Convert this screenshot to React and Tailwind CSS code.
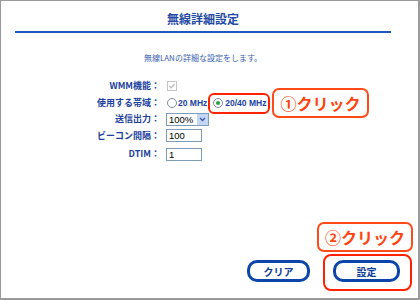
import React from 'react';

const Radio = ({ checked }) => (
  <span className="flex h-[10px] w-[10px] items-center justify-center rounded-full border border-[#7b8a9c] bg-white">
    {checked && <span className="h-[4px] w-[4px] rounded-full bg-[#21a33a]" />}
  </span>
);

const Row = ({ label, h, children }) => (
  <div className={`flex items-center ${h}`}>
    <div className="w-[159px] text-right text-[9px] font-bold leading-[12px] text-[#1b3f9e]">{label}</div>
    <div className="ml-[6px] flex items-center">{children}</div>
  </div>
);

const App = () => {
  return (
    <div className="relative box-border h-[300px] w-[420px] overflow-hidden border-t border-l border-r-2 border-b-2 border-[#9a9a9a] bg-white font-['Noto_Sans_CJK_JP',sans-serif]">
      {/* Header */}
      <div className="ml-[14px] w-[376px]">
        <h1 className="pt-[10px] text-center text-[12px] font-bold leading-[16px] text-[#1f4aa5]">無線詳細設定</h1>
        <div className="mt-[4px] h-[2px] bg-[#1c58c0]" />
        <p className="mt-[18px] text-center text-[8px] leading-[14px] text-[#3a5fb0]">無線LANの詳細な設定をします。</p>
      </div>

      {/* Form */}
      <div className="mt-[13px]">
        <Row label="WMM機能：" h="h-[16px]">
          <span className="ml-px flex h-[10px] w-[10px] items-center justify-center border border-[#c4c4c4] bg-white">
            <svg width="8" height="8" viewBox="0 0 8 8">
              <path d="M1.5 4 L3.2 5.8 L6.5 2" fill="none" stroke="#b8b8b8" strokeWidth="1.2" />
            </svg>
          </span>
        </Row>
        <Row label="使用する帯域：" h="h-[18px]">
          <span className="ml-px"><Radio /></span>
          <span className="ml-px font-['Liberation_Sans',sans-serif] text-[8.5px] font-bold text-[#1a44a0]">20 MHz</span>
          <span className="ml-[6px]"><Radio checked /></span>
          <span className="ml-[2px] font-['Liberation_Sans',sans-serif] text-[8.5px] font-bold text-[#1a44a0]">20/40 MHz</span>
        </Row>
        <Row label="送信出力：" h="h-[14px]">
          <div className="flex h-[13px] w-[43px] border border-[#7f9db9] bg-white">
            <span className="flex-1 pl-[2px] font-['Liberation_Sans',sans-serif] text-[9.5px] leading-[11px] text-black">100%</span>
            <span className="flex w-[11px] items-center justify-center bg-[#c5d5f5]">
              <svg width="7" height="5" viewBox="0 0 7 5">
                <path d="M1 1 L3.5 3.5 L6 1" fill="none" stroke="#3b5fa8" strokeWidth="1.4" />
              </svg>
            </span>
          </div>
        </Row>
        <Row label="ビーコン間隔：" h="h-[19px]">
          <div className="h-[13px] w-[36px] border border-[#7f9db9] bg-white pl-[2px] font-['Liberation_Sans',sans-serif] text-[9.5px] leading-[11px] text-black">100</div>
        </Row>
        <Row label="DTIM：" h="h-[18px]">
          <div className="h-[13px] w-[36px] border border-[#7f9db9] bg-white pl-[2px] font-['Liberation_Sans',sans-serif] text-[9.5px] leading-[11px] text-black">1</div>
        </Row>
      </div>

      {/* Buttons */}
      <div className="mt-[97px] flex justify-end gap-[23px] pr-[18px]">
        <button className="flex h-[22px] w-[63px] items-center justify-center rounded-[10px] border-[3px] border-[#0b45aa] bg-white text-[10px] font-bold text-[#0b3d99]">クリア</button>
        <button className="flex h-[22px] w-[67px] items-center justify-center rounded-[10px] border-[3px] border-[#0b45aa] bg-white text-[10px] font-bold text-[#0b3d99]">設定</button>
      </div>

      {/* Highlights */}
      <div className="absolute left-[207px] top-[92px] h-[21px] w-[62px] rounded-[6px] border-2 border-[#ff2200]" />
      <div className="absolute left-[271px] top-[87px] flex h-[30px] w-[97px] items-center justify-center rounded-[7px] border-2 border-[#ff4a1a] bg-white text-[16px] font-bold leading-none text-[#ff4411]">①クリック</div>
      <div className="absolute left-[316px] top-[221px] flex h-[30px] w-[96px] items-center justify-center rounded-[7px] border-2 border-[#ff4a1a] bg-white text-[16px] font-bold leading-none text-[#ff4411]">②クリック</div>
      <div className="absolute left-[322px] top-[253px] h-[37px] w-[89px] rounded-[8px] border-2 border-[#ff2200]" />
    </div>
  );
};

export default App;
